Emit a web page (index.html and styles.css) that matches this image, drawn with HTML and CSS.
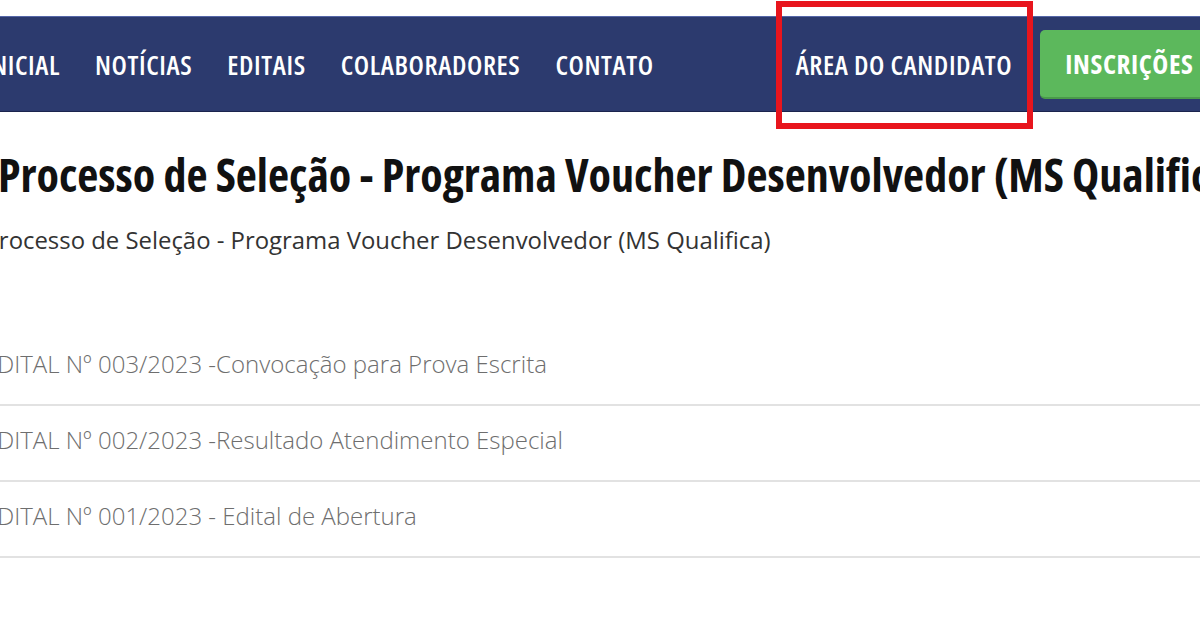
FILE: index.html
```html
<!DOCTYPE html>
<html lang="pt-BR">
<head>
<meta charset="utf-8">
<title>Processo de Seleção - Programa Voucher Desenvolvedor (MS Qualifica)</title>
<link rel="stylesheet" href="styles.css">
</head>
<body>
<header class="topbar">
  <nav class="nav-inner">
    <ul class="menu">
      <li><a href="#">INICIAL</a></li>
      <li><a href="#">NOTÍCIAS</a></li>
      <li><a href="#">EDITAIS</a></li>
      <li><a href="#">COLABORADORES</a></li>
      <li><a href="#">CONTATO</a></li>
    </ul>
    <div class="actions">
      <a class="area" href="#">ÁREA DO CANDIDATO<span class="highlight"></span></a>
      <a class="btn-inscricoes" href="#">INSCRIÇÕES</a>
    </div>
  </nav>
</header>
<main class="content">
  <h1 class="title">Processo de Seleção - Programa Voucher Desenvolvedor (MS Qualifica)</h1>
  <p class="subtitle">Processo de Seleção - Programa Voucher Desenvolvedor (MS Qualifica)</p>
  <ul class="docs">
    <li><a href="#">EDITAL Nº 003/2023 -Convocação para Prova Escrita</a></li>
    <li><a href="#">EDITAL Nº 002/2023 -Resultado Atendimento Especial</a></li>
    <li><a href="#">EDITAL Nº 001/2023 - Edital de Abertura</a></li>
  </ul>
</main>
</body>
</html>
```
FILE: styles.css
```css
html, body {
  margin: 0;
  padding: 0;
  background: #ffffff;
  overflow: hidden;
}
body {
  font-family: "Open Sans", "Liberation Sans", sans-serif;
  width: 1200px;
  height: 630px;
}
a { text-decoration: none; color: inherit; }
ul { list-style: none; margin: 0; padding: 0; }

.topbar {
  margin-top: 16px;
  height: 94px;
  background: #2c3a6e;
  border-top: 1px solid #5667a8;
  border-bottom: 1px solid #1b244d;
}
.nav-inner {
  display: flex;
  align-items: center;
  height: 100%;
  margin-left: -16px;
  font-family: "Open Sans", sans-serif;
  font-stretch: 75%;
  font-weight: 600;
  font-size: 27px;
  letter-spacing: 0.6px;
  color: #ffffff;
  white-space: nowrap;
}
.menu {
  display: flex;
  gap: 35px;
}
.actions {
  display: flex;
  align-items: center;
  margin-left: 142px;
}
.area {
  position: relative;
}
.highlight {
  position: absolute;
  left: -20px;
  top: -45px;
  width: 245px;
  height: 116px;
  border: 6px solid #e8151d;
}
.btn-inscricoes {
  margin-left: 28px;
  background: #5cb85c;
  border-radius: 5px;
  border-bottom: 2px solid #4a9a4a;
  padding: 0 25px;
  height: 67px;
  display: flex;
  align-items: center;
  font-weight: 700;
  letter-spacing: 0.6px;
}

.content {
  margin-left: -11px;
}
.title {
  margin: 34px 0 0 9px;
  font-family: "Open Sans", sans-serif;
  font-stretch: 75%;
  font-weight: bold;
  font-size: 46px;
  line-height: 56px;
  color: #111111;
  white-space: nowrap;
}
.subtitle {
  margin: 24px 0 0 -4.5px;
  font-size: 23.9px;
  line-height: 28px;
  color: #333333;
  white-space: nowrap;
}
.docs {
  margin-top: 76px;
  margin-left: -5px;
}
.docs li {
  padding: 19px 0 25px;
  line-height: 30px;
  font-size: 24px;
  font-weight: 300;
  color: #6e6e6e;
  border-bottom: 2px solid #e2e2e2;
  white-space: nowrap;
}
```
